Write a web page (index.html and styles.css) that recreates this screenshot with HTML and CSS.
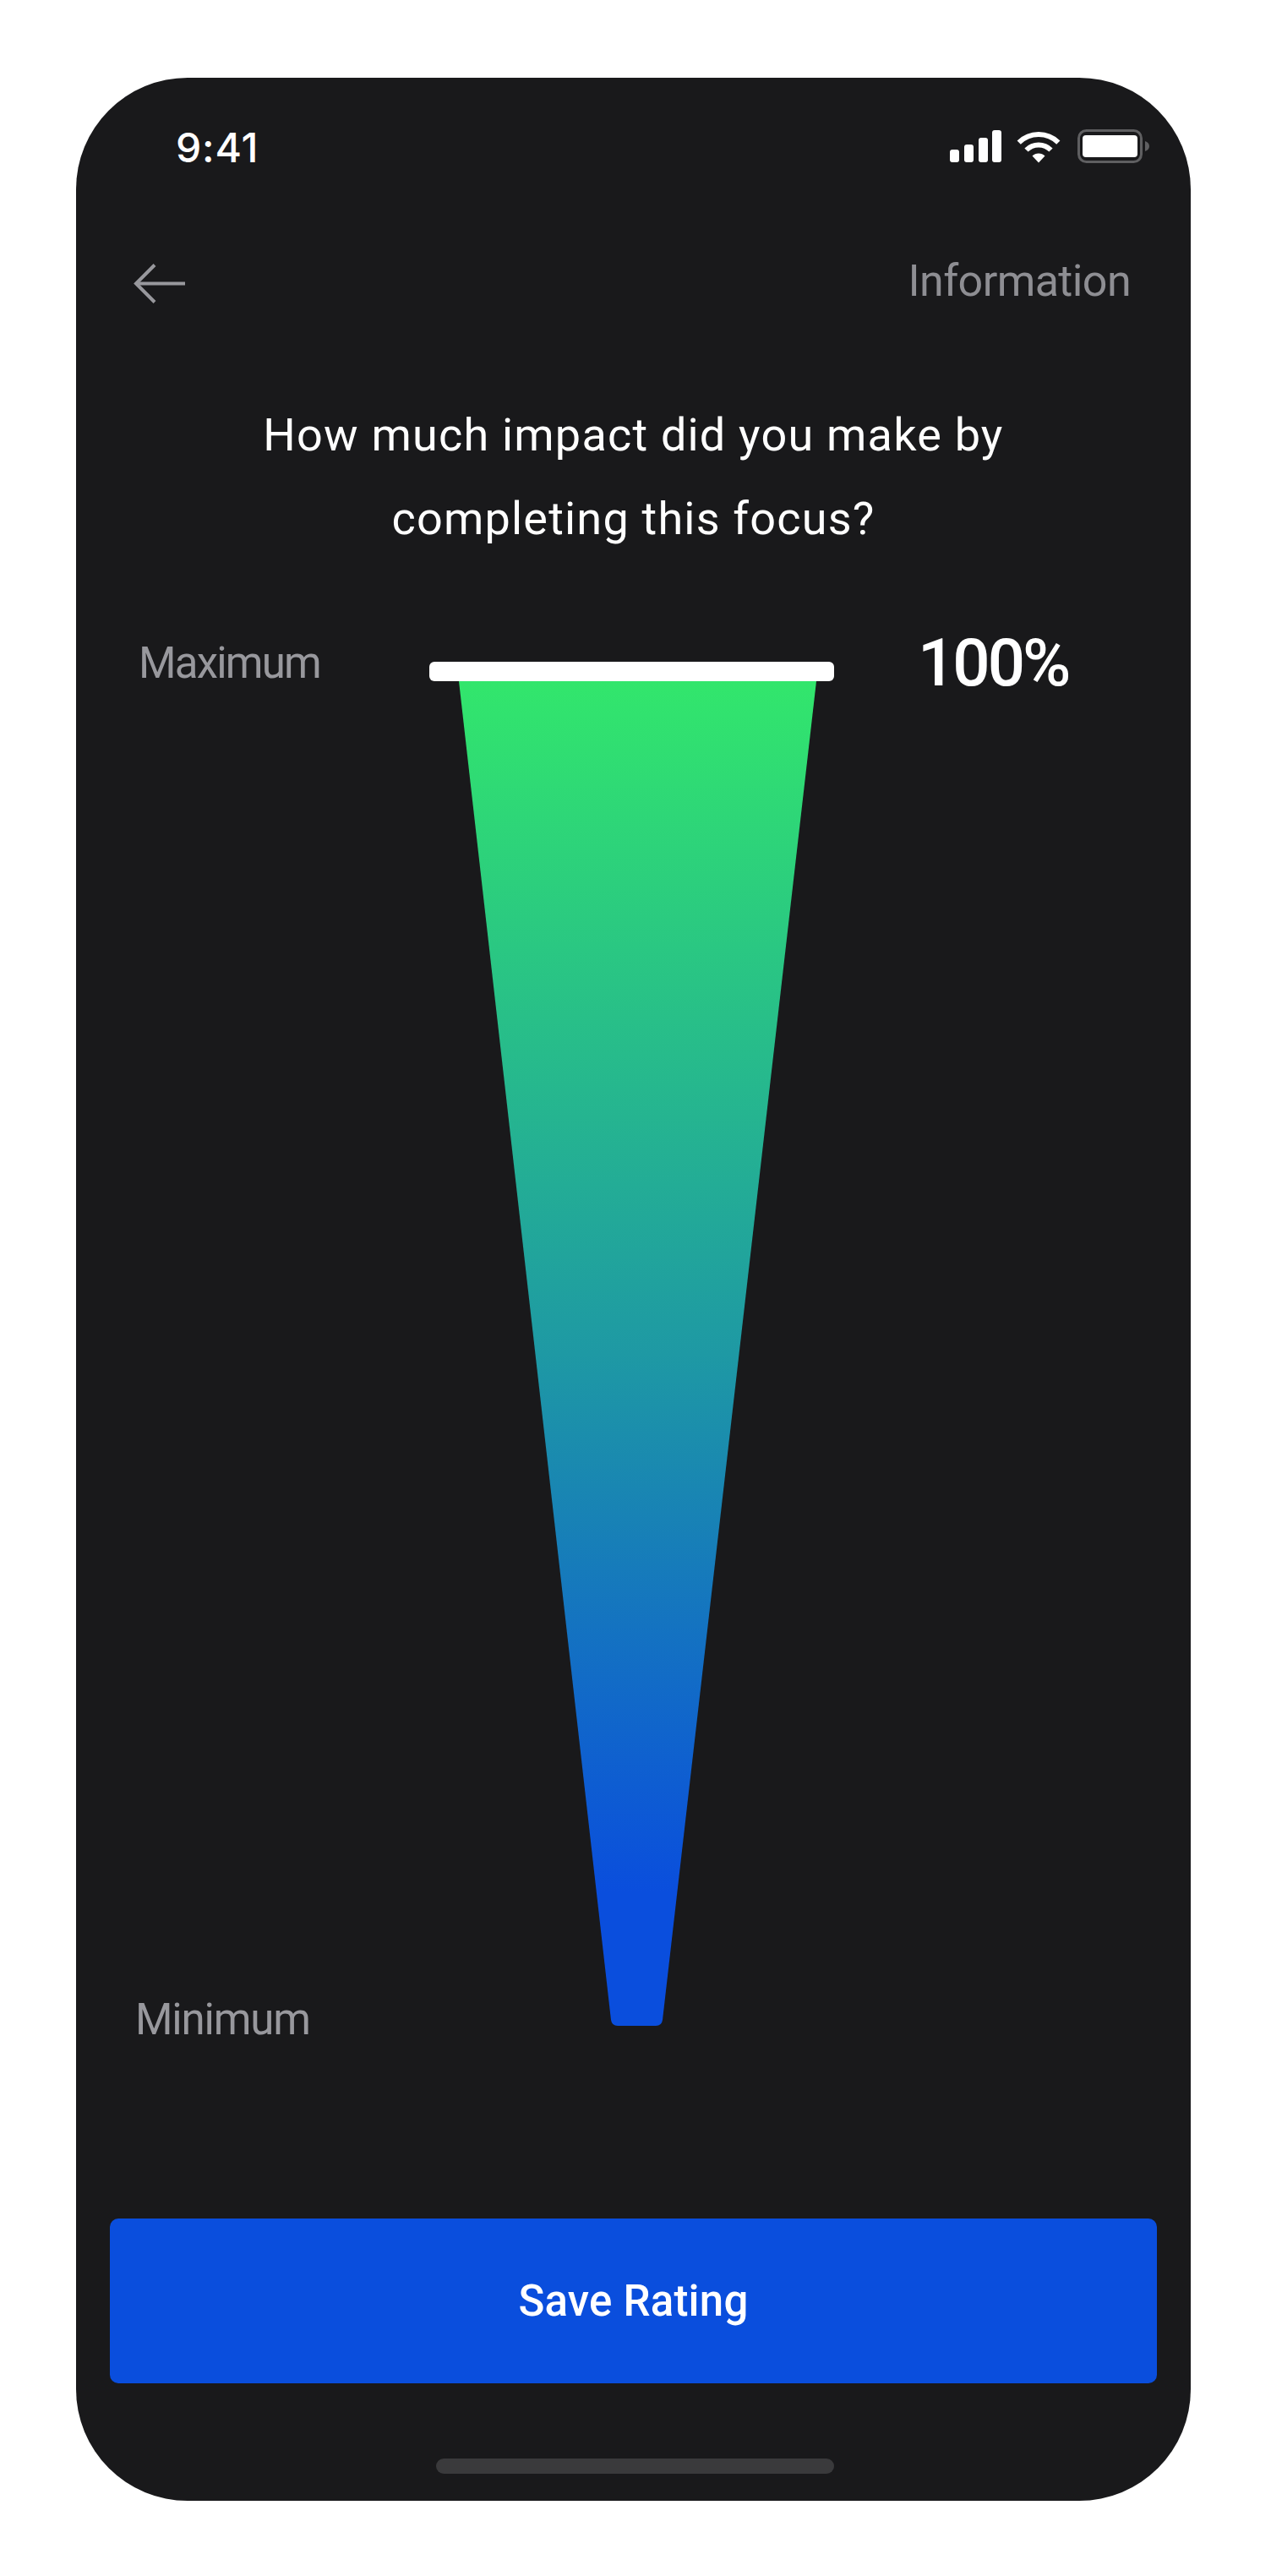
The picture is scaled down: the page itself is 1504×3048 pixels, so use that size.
FILE: index.html
```html
<!doctype html>
<html>
<head>
	<meta charset="utf-8">
	<title>Rate focus</title>
	<link rel="stylesheet" href="styles.css">
</head>
<body>
	<div class="phone">
		<div class="status">
			<span class="time">9:41</span>
			<div class="status-icons">
				<svg class="signal" width="61" height="38" viewBox="0 0 61 38" fill="#fff">
					<rect x="0" y="23" width="11" height="15" rx="3"/>
					<rect x="17" y="17" width="11" height="21" rx="3"/>
					<rect x="34" y="9" width="11" height="29" rx="3"/>
					<rect x="50" y="0" width="11" height="38" rx="3"/>
				</svg>
				<svg class="wifi" width="54" height="39" viewBox="0 0 54 39" fill="none" stroke="#fff" stroke-width="6">
					<path d="M3.7 14.7A33 33 0 0 1 50.3 14.7"/>
					<path d="M12.5 23.5A20.5 20.5 0 0 1 41.5 23.5"/>
					<path d="M27 38.5L19.5 30.5A10.6 10.6 0 0 1 34.5 30.5Z" fill="#fff" stroke="none"/>
				</svg>
				<svg class="battery" width="85" height="40" viewBox="0 0 85 40">
					<rect x="1.5" y="1.5" width="74" height="37" rx="9" fill="none" stroke="#5f5f61" stroke-width="3"/>
					<rect x="6" y="7" width="65" height="26" rx="4" fill="#fff"/>
					<path d="M80 14C83 15 85 17 85 20C85 23 83 25 80 26Z" fill="#5f5f61"/>
				</svg>
			</div>
		</div>
		<div class="nav">
			<svg width="62" height="47" viewBox="0 0 62 47" fill="none" stroke="#98989d" stroke-width="4">
				<path d="M61 23.500H3"/>
				<path d="M25 1.500L3 23.500L25 45.500"/>
			</svg>
			<span class="nav-link">Information</span>
		</div>
		<h1 class="question">How much impact did you make by<br>completing this focus?</h1>
		<div class="gauge">
			<div class="gauge-labels">
				<span class="label label-max">Maximum</span>
				<span class="label label-min">Minimum</span>
			</div>
			<div class="gauge-meter">
				<div class="handle"></div>
				<svg class="funnel" width="423" height="1591" viewBox="0 0 423 1591">
					<defs>
						<linearGradient id="funnelFill" x1="0" y1="0" x2="0" y2="1">
							<stop offset="0" stop-color="#32e66c"/>
							<stop offset="0.5" stop-color="#1e99a4"/>
							<stop offset="0.9" stop-color="#0a4edd"/>
						</linearGradient>
					</defs>
					<path d="M0 0H423L241 1584Q240 1591 233 1591H188Q181 1591 180 1584Z" fill="url(#funnelFill)"/>
				</svg>
			</div>
			<div class="gauge-value">100%</div>
		</div>
		<button class="save">Save Rating</button>
		<div class="home-bar"></div>
	</div>
</body>
</html>
```

FILE: styles.css
```css
body {
	margin: 0;
	background: #fff;
	font-family: Roboto, "Liberation Sans", sans-serif;
}
.phone {
	display: flex;
	flex-direction: column;
	box-sizing: border-box;
	width: 1319px;
	height: 2867px;
	margin: 92px 0 0 90px;
	border-radius: 132px;
	background: #19191b;
	color: #fff;
}
.status {
	display: flex;
	justify-content: space-between;
	align-items: center;
	height: 40px;
	padding: 61px 49px 0 118px;
}
.time {
	position: relative;
	top: 1px;
	font-family: Inter, sans-serif;
	font-size: 48px;
	font-weight: 500;
	letter-spacing: 0.8px;
}
.status-icons {
	display: flex;
	align-items: center;
}
.wifi {
	margin-left: 17px;
}
.battery {
	margin-left: 19px;
}
.nav {
	display: flex;
	justify-content: space-between;
	align-items: center;
	height: 60px;
	margin-top: 112px;
	padding: 0 71px 0 68px;
}
.nav-link {
	color: #8e8e93;
	font-size: 52px;
	font-weight: 400;
	line-height: 52px;
	margin-bottom: 5px;
	letter-spacing: -0.6px;
}
.question {
	margin: 100px 0 0;
	font-size: 54px;
	font-weight: 400;
	letter-spacing: 1.200px;
	line-height: 99px;
	text-align: center;
}
.gauge {
	display: flex;
	height: 1668px;
	margin-top: 89px;
}
.gauge-labels {
	display: flex;
	flex-direction: column;
	justify-content: space-between;
	box-sizing: border-box;
	width: 418px;
	padding-left: 70px;
}
.label {
	color: #98989d;
	font-size: 51px;
	font-weight: 400;
	line-height: 60px;
	letter-spacing: -1.200px;
	padding-top: 3px;
}
.label-max {
	padding-left: 4px;
	letter-spacing: -1.800px;
}
.gauge-meter {
	width: 479px;
	padding-top: 31px;
}
.handle {
	height: 23px;
	border-radius: 6px;
	background: #fff;
}
.funnel {
	display: block;
	margin-left: 35px;
}
.gauge-value {
	margin-left: 99px;
	font-size: 78px;
	font-weight: 500;
	letter-spacing: -3px;
	line-height: 66px;
}
.save {
	display: block;
	width: 1239px;
	height: 195px;
	margin: 205px 0 0 40px;
	padding: 0;
	border: 0;
	border-radius: 10px;
	background: #0a4edd;
	color: #fff;
	font-family: inherit;
	font-size: 51px;
	font-weight: 500;
	letter-spacing: 0.2px;
}
.home-bar {
	width: 471px;
	height: 18px;
	margin: 89px 0 0 426px;
	border-radius: 9px;
	background: #3a3a3c;
}
```
